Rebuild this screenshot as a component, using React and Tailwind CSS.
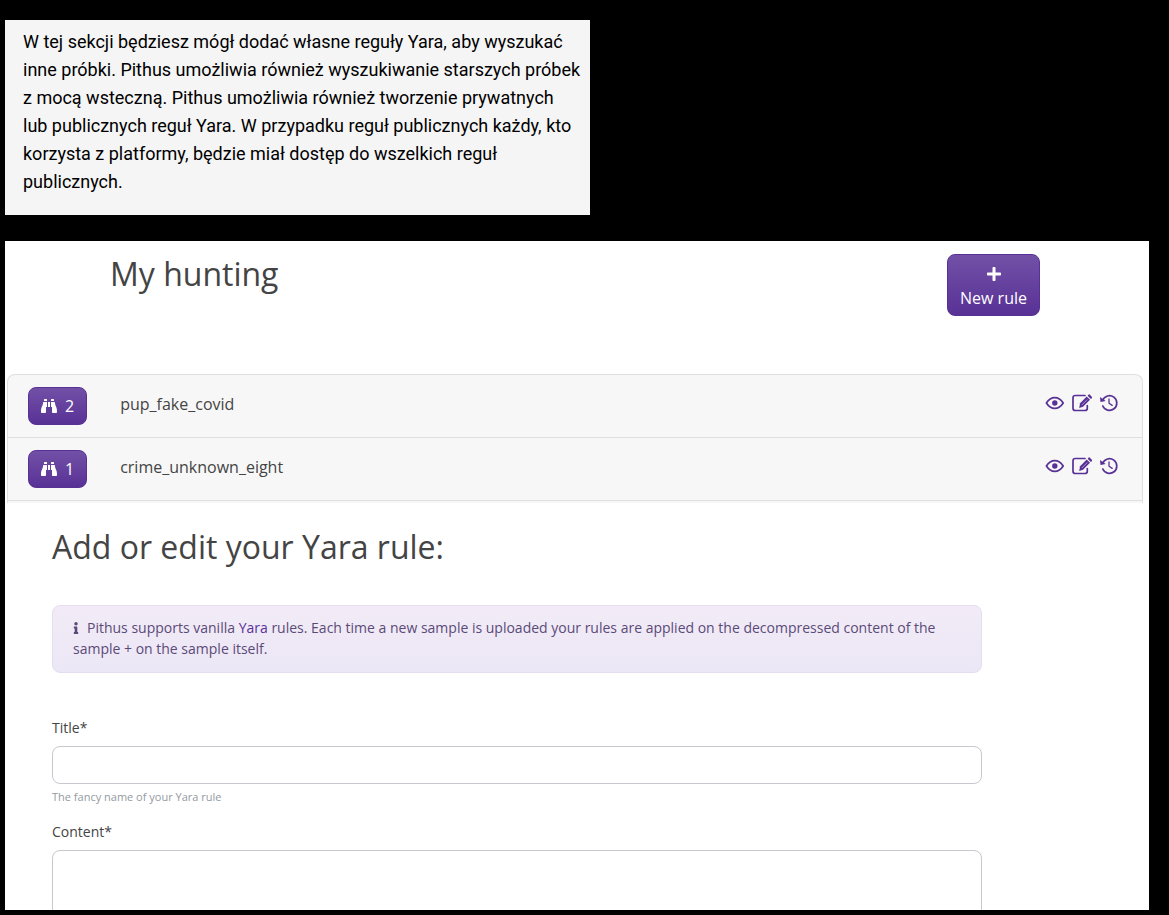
import { FaBinoculars, FaPlus, FaInfo } from "react-icons/fa";

const rules = [
  { name: "pup_fake_covid", matches: 2 },
  { name: "crime_unknown_eight", matches: 1 },
];

function EyeIcon() {
  return (
    <svg viewBox="0 0 20 20" className="size-5" fill="none" stroke="currentColor" strokeWidth="1.7">
      <path d="M1.4 10C3.8 6.2 6.600 4.600 9.800 4.600S15.800 6.200 18.200 10C15.800 13.800 13 15.400 9.800 15.400S3.800 13.800 1.400 10Z" strokeLinejoin="round" />
      <circle cx="9.800" cy="10" r="2.700" fill="currentColor" stroke="none" />
    </svg>
  );
}

function EditIcon() {
  return (
    <svg viewBox="0 0 20 20" className="size-5" fill="none" stroke="currentColor" strokeWidth="1.7">
      <path d="M13 2.500H3.300Q1 2.500 1 4.800V15.200Q1 17.500 3.300 17.500H13Q15.300 17.500 15.300 15.200V12.500" strokeLinecap="round" />
      <path d="M14.700 3.500 18 6.800 11 13.800 7.200 14.900 8.100 10.200Z" fill="currentColor" stroke="none" />
      <path d="M15.600 2.700 16.700 1.600Q17.200 1.100 17.700 1.600L20 3.900Q20.400 4.400 20 4.900L18.900 6Z" fill="currentColor" stroke="none" />
      <path d="M9.800 12 15.300 6.500" stroke="#f7f7f7" strokeWidth="0.500" />
    </svg>
  );
}

function HistoryIcon() {
  return (
    <svg viewBox="0 0 20 20" className="size-5" fill="none" stroke="currentColor" strokeWidth="1.7">
      <path d="M3.700 7.300A7.300 7.300 0 1 1 3.800 13" strokeLinecap="round" />
      <path d="M1 3.900 1.500 9.100 6.700 8Z" fill="currentColor" stroke="none" />
      <path d="M10 6V10.200L13.200 12.400" strokeWidth="1.300" strokeLinecap="round" />
    </svg>
  );
}

const actions = [
  { label: "View", Icon: EyeIcon },
  { label: "Edit", Icon: EditIcon },
  { label: "History", Icon: HistoryIcon },
];

const purple =
  "rounded-lg border border-[#593196] bg-linear-to-b from-[#7250a6] to-[#593196] text-white";

export default function App() {
  return (
    <div className="flex h-screen flex-col overflow-hidden bg-black pt-5 pr-5 pb-[5px] pl-[5px] font-['Open_Sans',sans-serif] text-[#444]">
      <p className="max-w-[585px] shrink-0 bg-[#f5f5f5] pt-2 pr-2 pb-[19px] pl-[18px] font-['Roboto',sans-serif] text-lg leading-7 text-black">
        W tej sekcji będziesz mógł dodać własne reguły Yara, aby wyszukać inne próbki. Pithus umożliwia
        również wyszukiwanie starszych próbek z mocą wsteczną. Pithus umożliwia również tworzenie
        prywatnych lub publicznych reguł Yara. W przypadku reguł publicznych każdy, kto korzysta z
        platformy, będzie miał dostęp do wszelkich reguł publicznych.
      </p>

      <main className="mt-[26px] min-h-0 flex-1 overflow-hidden bg-white">
        <header className="flex items-start justify-between pt-[13px] pr-[109px] pl-[105px]">
          <h1 className="text-[32px] leading-10">My hunting</h1>
          <button type="button" className={`flex flex-col items-center px-3 pt-[7px] pb-[5px] leading-6 ${purple}`}>
            <span className="flex h-6 items-center">
              <FaPlus />
            </span>
            New rule
          </button>
        </header>

        <div className="mt-[58px] mr-[6px] ml-[2px] rounded-t-lg border-x border-t border-[#dfdfdf] bg-[#f7f7f7] pb-[2px]">
          <ul>
            {rules.map((rule) => (
              <li key={rule.name} className="flex h-[63px] items-center border-b border-[#dfdfdf] pr-[23px] pl-5">
                <button type="button" className={`flex h-[38px] items-center gap-2 px-3 ${purple}`}>
                  <FaBinoculars />
                  {rule.matches}
                </button>
                <span className="ml-[33px] pb-1">{rule.name}</span>
                <span className="ml-auto flex gap-[7px] pb-[6px] text-[#593196]">
                  {actions.map(({ label, Icon }) => (
                    <button type="button" key={label} aria-label={`${label} ${rule.name}`}>
                      <Icon />
                    </button>
                  ))}
                </span>
              </li>
            ))}
          </ul>
        </div>

        <section className="mr-[167px] ml-[47px] pt-6 text-sm">
          <h2 className="text-[32px] leading-10">Add or edit your Yara rule:</h2>
          <p className="mt-[38px] rounded-lg border border-[#e4def0] bg-linear-to-b from-[#f2ebf7] to-[#ece7f6] px-5 pt-[11px] pb-[13px] leading-[21px] text-[#5b4a78]">
            <FaInfo className="mr-2 inline h-3 w-[6px] align-[-1px]" />
            Pithus supports vanilla{" "}
            <a href="#yara" className="text-[#593196]">
              Yara
            </a>{" "}
            rules. Each time a new sample is uploaded your rules are applied on the decompressed content of the
            sample + on the sample itself.
          </p>
          <form>
            <label htmlFor="title" className="mt-11 block leading-[21px]">
              Title*
            </label>
            <input
              id="title"
              className="mt-2 block h-[38px] w-full rounded-lg border border-[#c8c8cf] px-3 outline-none"
            />
            <small className="mt-1 block text-[11px] leading-[18px] text-[#949aa2]">
              The fancy name of your Yara rule
            </small>
            <label htmlFor="content" className="mt-[15px] block leading-[21px]">
              Content*
            </label>
            <textarea
              id="content"
              className="mt-2 block h-60 w-full resize-none rounded-lg border border-[#c8c8cf] p-3 outline-none"
            />
          </form>
        </section>
      </main>
    </div>
  );
}
